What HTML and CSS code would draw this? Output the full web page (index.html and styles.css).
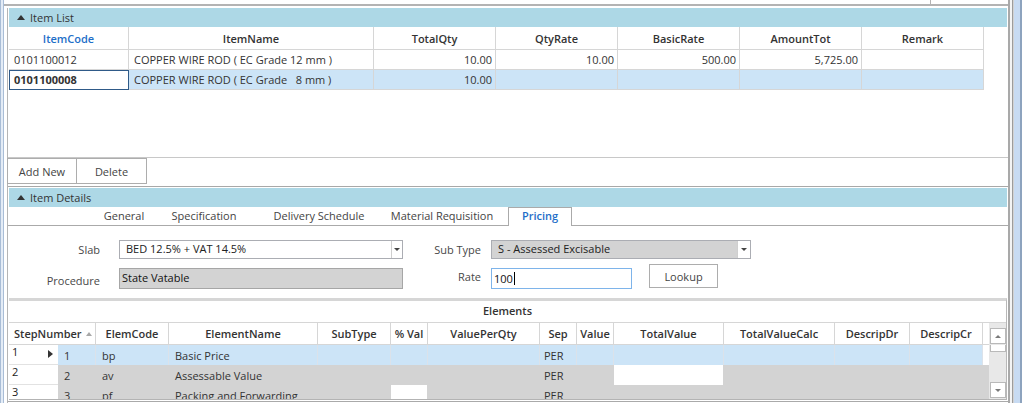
FILE: index.html
```html
<!DOCTYPE html>
<html>
<head>
<meta charset="utf-8">
<title>Item Details</title>
<link rel="stylesheet" href="styles.css">
</head>
<body>
<div class="window">
  <div class="frame-left"></div>
  <div class="main">
    <div class="topstrip"><div class="topstrip-cell"></div></div>
    <div class="content">
      <section class="list">
        <div class="phead"><span class="collapse"></span><span>Item List</span></div>
        <div class="list-body">
          <table class="igrid">
            <colgroup>
              <col class="w120"><col class="w245"><col class="w122"><col class="w122"><col class="w122"><col class="w122"><col class="w122">
            </colgroup>
            <thead>
              <tr><th class="sorted">ItemCode</th><th>ItemName</th><th>TotalQty</th><th>QtyRate</th><th>BasicRate</th><th>AmountTot</th><th>Remark</th></tr>
            </thead>
            <tbody>
              <tr><td>0101100012</td><td>COPPER WIRE ROD ( EC Grade 12 mm )</td><td class="num">10.00</td><td class="num">10.00</td><td class="num">500.00</td><td class="num">5,725.00</td><td></td></tr>
              <tr class="sel"><td class="focus">0101100008</td><td class="pre">COPPER WIRE ROD ( EC Grade   8 mm )</td><td class="num">10.00</td><td></td><td></td><td></td><td></td></tr>
            </tbody>
          </table>
        </div>
        <div class="btnbar">
          <button class="btn btn-add">Add New</button>
          <button class="btn btn-del">Delete</button>
        </div>
      </section>
      <section class="details">
        <div class="phead"><span class="collapse"></span><span>Item Details</span></div>
        <div class="tabs">
          <div class="tab t-general">General</div>
          <div class="tab t-spec">Specification</div>
          <div class="tab t-delivery">Delivery Schedule</div>
          <div class="tab t-material">Material Requisition</div>
          <div class="tab t-pricing active">Pricing</div>
        </div>
        <div class="tabpage">
          <div class="form">
            <div class="frow frow-a">
              <div class="lbl lbl-left">Slab</div>
              <div class="combo combo-slab"><div class="combo-text">BED 12.5% + VAT 14.5%</div><div class="combo-btn"><span class="arrow-down"></span></div></div>
              <div class="lbl lbl-right">Sub Type</div>
              <div class="combo combo-sub"><div class="combo-text">S - Assessed Excisable</div><div class="combo-btn"><span class="arrow-down"></span></div></div>
            </div>
            <div class="frow frow-b">
              <div class="lbl lbl-left lbl-proc">Procedure</div>
              <div class="ro">State Vatable</div>
              <div class="lbl lbl-right">Rate</div>
              <div class="rate">100<span class="caret"></span></div>
              <button class="btn btn-lookup">Lookup</button>
            </div>
          </div>
          <div class="elements">
            <div class="caption">Elements</div>
            <div class="ebody">
              <div class="ewrap">
                <table class="egrid">
                  <colgroup>
                    <col class="w49"><col class="w38"><col class="w73"><col class="w149"><col class="w73"><col class="w37"><col class="w112"><col class="w37"><col class="w37"><col class="w110"><col class="w111"><col class="w75"><col class="w73"><col class="w6">
                  </colgroup>
                  <thead>
                    <tr>
                      <th colspan="2" class="th-step"><div class="step-head"><span>StepNumber</span><span class="sort-up"></span></div></th>
                      <th>ElemCode</th><th>ElementName</th><th>SubType</th><th>% Val</th><th>ValuePerQty</th><th>Sep</th><th>Value</th><th>TotalValue</th><th>TotalValueCalc</th><th>DescripDr</th><th>DescripCr</th><th class="filler"></th>
                    </tr>
                  </thead>
                  <tbody>
                    <tr class="erow cur">
                      <td class="rh"><div class="rh-in"><span class="rh-num">1</span><span class="pointer"></span></div></td>
                      <td>1</td><td>bp</td><td>Basic Price</td><td></td><td></td><td></td><td class="sep">PER</td><td></td><td></td><td></td><td></td><td></td><td class="filler"></td>
                    </tr>
                    <tr class="erow">
                      <td class="rh"><div class="rh-in"><span class="rh-num">2</span></div></td>
                      <td>2</td><td>av</td><td>Assessable Value</td><td></td><td></td><td></td><td class="sep">PER</td><td></td><td class="edit"></td><td></td><td></td><td></td><td class="filler"></td>
                    </tr>
                    <tr class="erow">
                      <td class="rh"><div class="rh-in"><span class="rh-num">3</span></div></td>
                      <td>3</td><td>pf</td><td>Packing and Forwarding</td><td></td><td class="edit"></td><td></td><td class="sep">PER</td><td></td><td></td><td></td><td></td><td></td><td class="filler"></td>
                    </tr>
                  </tbody>
                </table>
              </div>
              <div class="vscroll">
                <div class="sb-btn"><span class="sb-up"></span></div>
                <div class="sb-thumb"></div>
                <div class="sb-track"></div>
                <div class="sb-btn"><span class="sb-down"></span></div>
              </div>
            </div>
          </div>
        </div>
      </section>
    </div>
  </div>
  <div class="frame-right"></div>
</div>
</body>
</html>
```
FILE: styles.css
```css
* { box-sizing: border-box; margin: 0; padding: 0; }
html, body { width: 1022px; height: 403px; overflow: hidden; background: #fff; }
body { font-family: "Open Sans", "Noto Sans", "Liberation Sans", sans-serif; font-size: 11px; color: #333; }

.window { display: flex; width: 1022px; height: 403px; }
.frame-left { width: 4px; flex: none; background: linear-gradient(to right, #a9bdd6 0 1px, #e4ecf6 1px 3px, #a9bdd6 3px 4px); }
.main { width: 1006px; flex: none; display: flex; flex-direction: column; border-right: 2px solid #a9a9a9; }
.frame-right { flex: 1; background: linear-gradient(to right, #f4f4f4 0 2px, #9c9c9c 2px 3px, #d2d2d2 3px 4px, #c8dbf2 4px 10px, #8da3be 10px 12px); }

.topstrip { height: 6px; flex: none; border-bottom: 2px solid #b3b3b3; display: flex; justify-content: flex-end; }
.topstrip-cell { width: 78px; border-left: 1px solid #b3b3b3; }

.content { margin-top: 2px; margin-left: 3px; border-left: 1px solid #b5b5b5; flex: 1; display: flex; flex-direction: column; }

.phead { height: 19px; flex: none; margin: 0 1px; background: #add8e6; display: flex; align-items: center; color: #333; }
.collapse { width: 0; height: 0; border-left: 4px solid transparent; border-right: 4px solid transparent; border-bottom: 5px solid #333; margin-left: 8px; margin-right: 5px; }

/* Item list */
.list-body { height: 131px; border-bottom: 1px solid #c8c8c8; padding-left: 1px; }
table { border-collapse: separate; border-spacing: 0; table-layout: fixed; }
th, td { overflow: hidden; white-space: nowrap; }
.igrid { width: 975px; }
.w120 { width: 120px; } .w245 { width: 245px; } .w122 { width: 122px; }
.igrid th { height: 23px; font-weight: 600; color: #333; text-align: center; border-right: 1px solid #d6d6d6; border-bottom: 1px solid #d6d6d6; padding: 0 4px; }
.igrid th.sorted { color: #1e6ec8; }
.igrid td { height: 20px; padding: 0 5px 0 5px; border-right: 1px solid #d6d6d6; border-bottom: 1px solid #d6d6d6; color: #333; }
.igrid td.num { text-align: right; padding-right: 3px; }
.igrid td.pre { white-space: pre; }
.igrid tr.sel td { background: #cce4f7; }
.igrid tr.sel td.focus { background: #fff; font-weight: 700; outline: 1px solid #2f5a88; outline-offset: -1px; }

.btnbar { height: 28px; flex: none; display: flex; margin-left: -1px; }
.btn { height: 26px; border: 1px solid #adadad; background: #fff; font: inherit; color: #444; }
.btn-add { width: 70px; }
.btn-del { width: 71px; margin-left: -1px; }

/* Details */
.details { border-top: 1px solid #a8a8a8; padding-top: 1px; flex: 1; display: flex; flex-direction: column; }
.tabs { height: 18px; flex: none; display: flex; padding-left: 86px; }
.tab { line-height: 17px; text-align: center; color: #444; }
.t-general { width: 60px; }
.t-spec { width: 100px; }
.t-delivery { width: 130px; }
.t-material { width: 116px; }
.t-pricing { width: 64px; margin-left: 8px; }
.tab.active { height: 19px; border: 1px solid #aaa; border-bottom: none; background: #fff; color: #1e6ec8; font-weight: 600; position: relative; z-index: 1; line-height: 16px; }

.tabpage { height: 177px; flex: none; border-top: 1px solid #aaa; border-bottom: 1px solid #aaa; padding-bottom: 1px; display: flex; flex-direction: column; }

.form { height: 72px; flex: none; padding-top: 14px; }
.frow { display: flex; align-items: center; }
.frow-a { height: 19px; }
.frow-b { height: 25px; margin-top: 5px; }
.lbl { color: #484848; text-align: right; line-height: 15px; }
.lbl-left { width: 92px; }
.lbl-right { width: 60px; margin-left: 18px; }
.lbl-proc { align-self: flex-end; margin-bottom: 1px; }

.combo { display: flex; height: 19px; border: 1px solid #abadb3; background: #fff; margin-left: 19px; }
.combo-slab { width: 284px; }
.combo-sub { width: 260px; margin-left: 10px; }
.combo-sub .combo-text { background: #d3d3d3; }
.combo-text { flex: 1; padding-left: 6px; line-height: 16px; color: #222; }
.combo-btn { width: 11px; border-left: 1px solid #cfcfcf; display: flex; align-items: center; justify-content: center; background: #fff; }
.combo-sub .combo-btn { width: 13px; }
.arrow-down { width: 0; height: 0; border-left: 3px solid transparent; border-right: 3px solid transparent; border-top: 3px solid #444; }

.ro { width: 284px; height: 21px; margin-left: 19px; align-self: flex-end; background: #d3d3d3; border: 1px solid #a6a6a6; padding-left: 2px; line-height: 17px; color: #111; }
.rate { width: 141px; height: 21px; margin-left: 10px; align-self: flex-end; border: 1px solid #7eb4ea; padding-left: 2px; line-height: 19px; color: #111; display: flex; align-items: center; }
.caret { display: inline-block; width: 1px; height: 13px; background: #000; margin-left: 1px; }
.btn-lookup { width: 69px; height: 24px; margin-left: 17px; align-self: flex-start; }

/* Elements grid */
.elements { height: 102px; flex: none; margin: 0 1px; border-top: 3px solid #d6d6d6; border-right: 1px solid #b8b8b8; border-bottom: 1px solid #b3b3b3; display: flex; flex-direction: column; }
.caption { height: 22px; flex: none; border-bottom: 1px solid #d6d6d6; text-align: center; font-weight: 600; color: #333; line-height: 20px; }
.ebody { flex: 1; display: flex; overflow: hidden; }
.ewrap { width: 980px; flex: none; overflow: hidden; }
.egrid { width: 980px; }
.w49 { width: 49px; } .w38 { width: 38px; } .w73 { width: 73px; } .w149 { width: 149px; } .w37 { width: 37px; } .w112 { width: 112px; } .w110 { width: 110px; } .w111 { width: 111px; } .w75 { width: 75px; } .w6 { width: 6px; }
.egrid th { height: 22px; font-weight: 600; color: #333; text-align: center; border-right: 1px solid #d6d6d6; border-bottom: 1px solid #d6d6d6; padding: 0 2px; }
.egrid th.filler { border-right: none; }
.egrid th.th-step { text-align: left; padding: 0 3px 0 5px; }
.step-head { display: flex; align-items: center; justify-content: space-between; }
.sort-up { width: 0; height: 0; border-left: 3.5px solid transparent; border-right: 3.5px solid transparent; border-bottom: 4px solid #a8a8a8; }
.egrid td { height: 20px; padding: 0 2px 0 6px; color: #333; background: #d3d3d3; border-right: 1px solid #d3d3d3; }
.egrid td.sep { padding-left: 4px; }
.egrid td.edit { background: #fff; }
.egrid tr.cur td { background: #cce4f7; border-right-color: #dbe2ea; }
.egrid tr.cur td.filler { background: #fff; border-right: none; }
.egrid td.rh { background: #fff; border-right: none; border-bottom: 1px solid #e2e2e2; padding: 0 5px 0 3px; vertical-align: top; }
.egrid tr.cur td.rh { background: #fff; }
.rh-in { display: flex; justify-content: space-between; align-items: flex-start; height: 19px; }
.rh-num { line-height: 14px; color: #222; }
.pointer { width: 0; height: 0; margin-top: 5px; border-top: 4.5px solid transparent; border-bottom: 4.5px solid transparent; border-left: 5px solid #333; }

.vscroll { width: 17px; flex: none; background: #e8e8e8; display: flex; flex-direction: column; padding: 5px 0 1px 1px; }
.sb-btn { height: 16px; flex: none; border: 1px solid #b9b9b9; background: #fff; display: flex; align-items: center; justify-content: center; }
.sb-thumb { height: 7px; flex: none; margin-top: 1px; border: 1px solid #b9b9b9; border-top: none; background: #fff; }
.sb-track { flex: 1; }
.sb-up { width: 0; height: 0; border-left: 3px solid transparent; border-right: 3px solid transparent; border-bottom: 3px solid #7a7a7a; }
.sb-down { width: 0; height: 0; border-left: 3px solid transparent; border-right: 3px solid transparent; border-top: 3px solid #7a7a7a; }
```
